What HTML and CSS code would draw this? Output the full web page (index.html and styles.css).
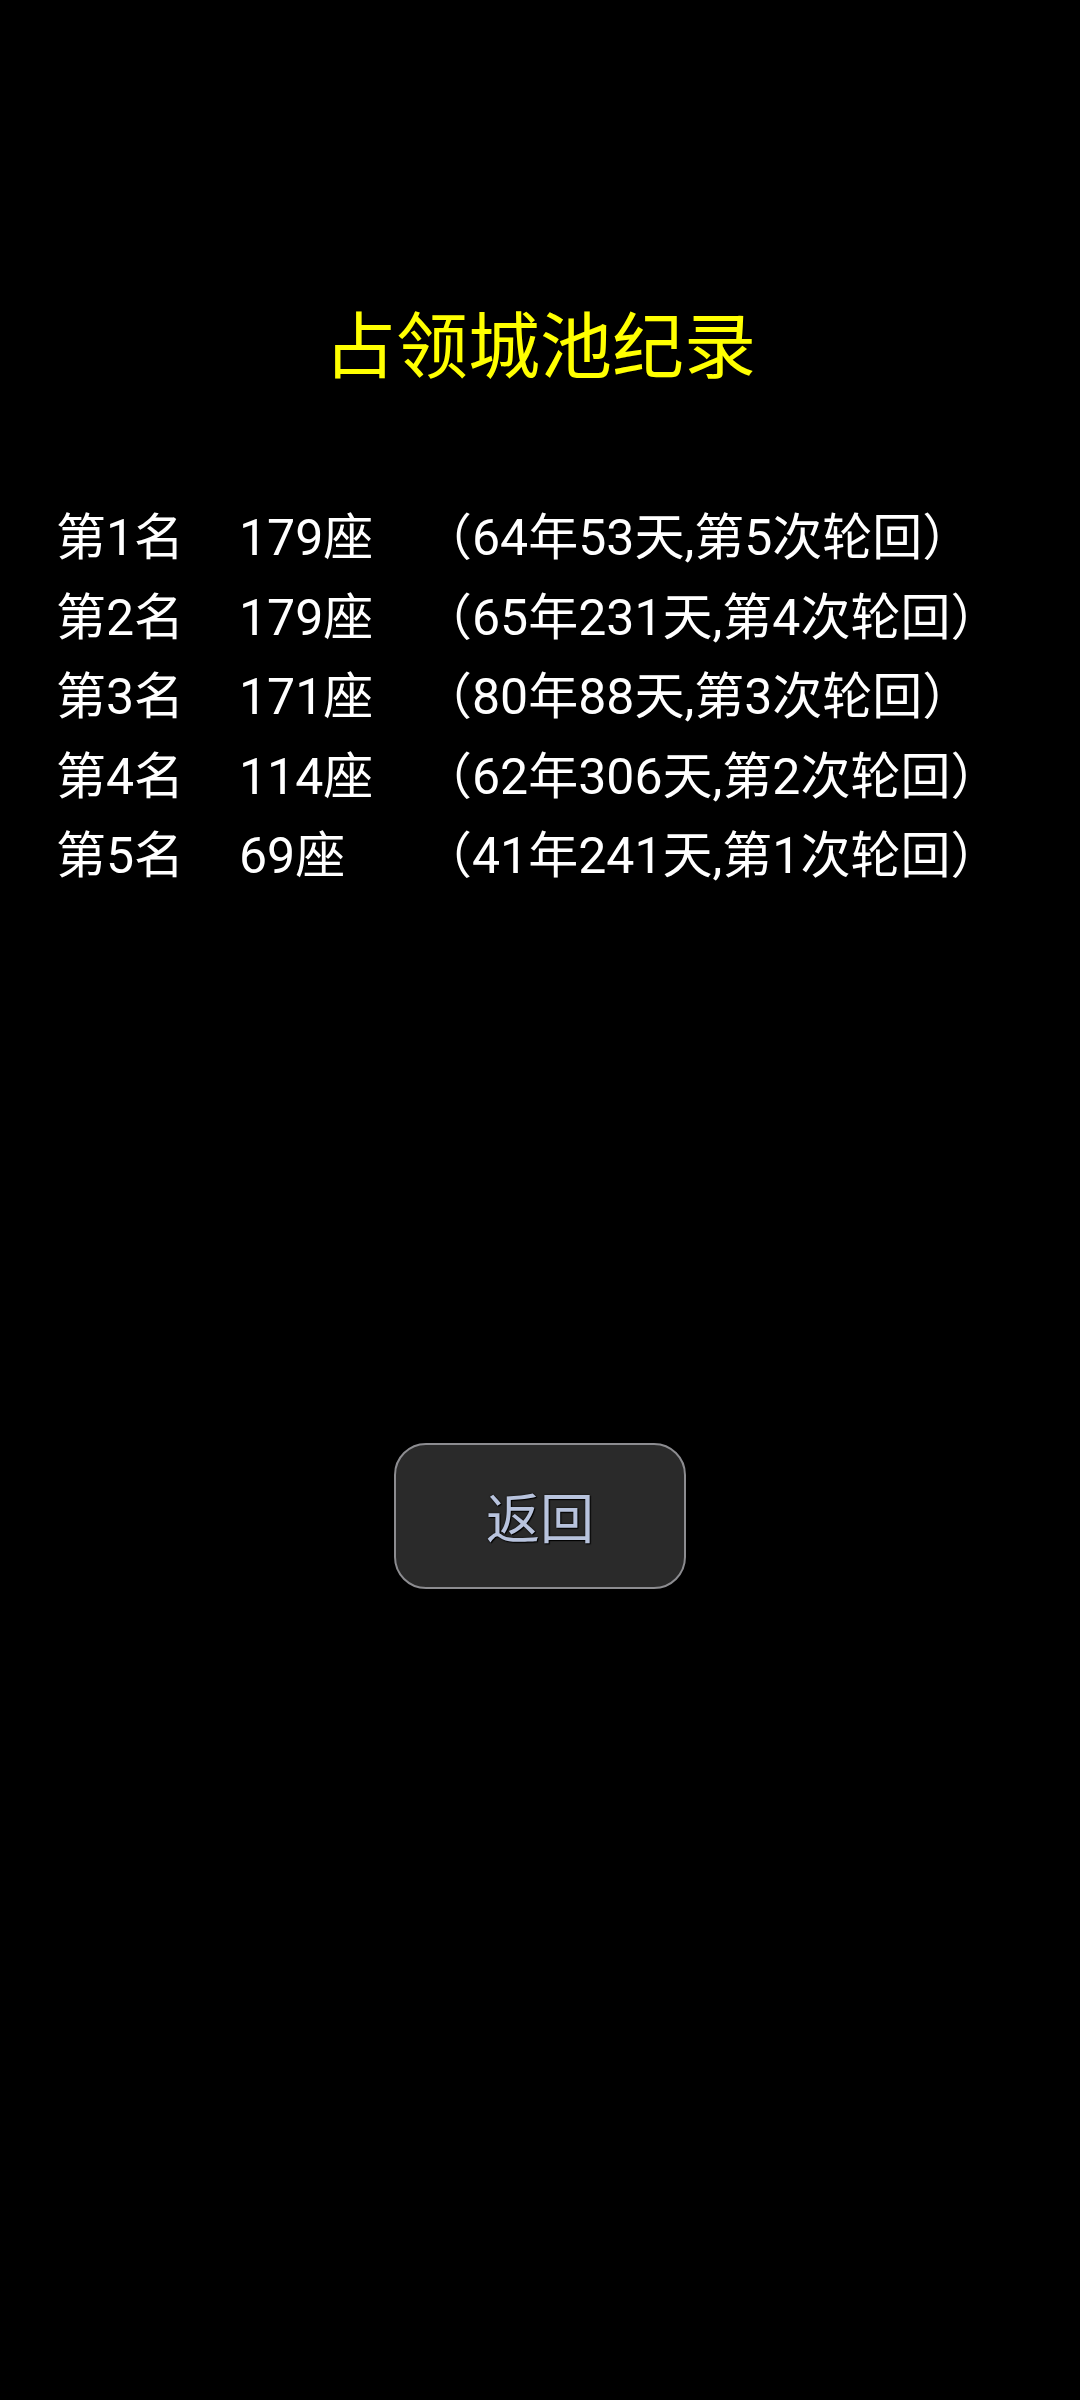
FILE: index.html
```html
<!DOCTYPE html>
<html lang="zh-CN">
<head>
    <meta charset="UTF-8">
    <meta name="viewport" content="width=device-width, initial-scale=1.0">
    <title>占领城池纪录</title>
    <link rel="stylesheet" href="styles.css">
</head>
<body>
    <div class="screen">
        <h1 class="title">占领城池纪录</h1>

        <div class="records">
            <div class="row">
                <span class="rank">第1名</span>
                <span class="count">179座</span>
                <span class="detail">（64年53天,第5次轮回）</span>
            </div>
            <div class="row">
                <span class="rank">第2名</span>
                <span class="count">179座</span>
                <span class="detail">（65年231天,第4次轮回）</span>
            </div>
            <div class="row">
                <span class="rank">第3名</span>
                <span class="count">171座</span>
                <span class="detail">（80年88天,第3次轮回）</span>
            </div>
            <div class="row">
                <span class="rank">第4名</span>
                <span class="count">114座</span>
                <span class="detail">（62年306天,第2次轮回）</span>
            </div>
            <div class="row">
                <span class="rank">第5名</span>
                <span class="count">69座</span>
                <span class="detail">（41年241天,第1次轮回）</span>
            </div>
        </div>

        <div class="actions">
            <button class="btn-back">返回</button>
        </div>
    </div>
</body>
</html>
```

FILE: styles.css
```css
html, body {
    margin: 0;
    padding: 0;
    background: #000;
}
body {
    font-family: Roboto, "Noto Sans CJK SC", sans-serif;
    color: #fff;
    width: 1080px;
    height: 2400px;
    overflow: hidden;
}
.screen {
    padding-top: 306px;
}
.title {
    margin: 0;
    text-align: center;
    color: #ffff00;
    font-size: 72px;
    font-weight: normal;
    line-height: 84px;
}
.records {
    margin-top: 109px;
    padding-left: 56px;
}
.row {
    display: grid;
    grid-template-columns: 183px 183px auto;
    font-size: 50px;
    line-height: 79.6px;
    white-space: nowrap;
}
.actions {
    display: flex;
    justify-content: center;
    margin-top: 546px;
}
.btn-back {
    width: 292px;
    height: 146px;
    background: #2a2a2a;
    border: 2px solid #8c8c90;
    border-radius: 32px;
    color: #b8c3dd;
    font-family: Roboto, "Noto Sans CJK SC", sans-serif;
    font-size: 54px;
    text-shadow: 0 0 2px #000, 1px 1px 1px #000;
    padding: 0;
}
```
